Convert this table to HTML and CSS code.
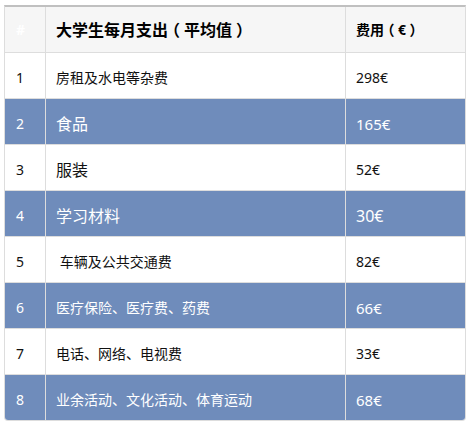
FILE: index.html
```html
<!DOCTYPE html>
<html lang="zh-CN">
<head>
<meta charset="utf-8">
<title>大学生每月支出</title>
<link rel="stylesheet" href="styles.css">
</head>
<body>
<div class="table-wrap">
  <table class="expenses">
    <colgroup>
      <col class="c-idx">
      <col class="c-item">
      <col class="c-cost">
    </colgroup>
    <thead>
      <tr>
        <th class="idx">#</th>
        <th class="item">大学生每月支出<span class="paren">（</span>平均值<span class="paren">）</span></th>
        <th class="cost">费用<span class="paren">（</span>€<span class="paren">）</span></th>
      </tr>
    </thead>
    <tbody>
      <tr>
        <td class="idx">1</td>
        <td class="item s14">房租及水电等杂费</td>
        <td class="cost s14">298€</td>
      </tr>
      <tr class="alt">
        <td class="idx">2</td>
        <td class="item s16">食品</td>
        <td class="cost s15">165€</td>
      </tr>
      <tr>
        <td class="idx">3</td>
        <td class="item s16">服装</td>
        <td class="cost s14">52€</td>
      </tr>
      <tr class="alt">
        <td class="idx">4</td>
        <td class="item s16">学习材料</td>
        <td class="cost s16">30€</td>
      </tr>
      <tr>
        <td class="idx">5</td>
        <td class="item s14">&nbsp;车辆及公共交通费</td>
        <td class="cost s14">82€</td>
      </tr>
      <tr class="alt">
        <td class="idx">6</td>
        <td class="item s14">医疗保险、医疗费、药费</td>
        <td class="cost s15">66€</td>
      </tr>
      <tr>
        <td class="idx">7</td>
        <td class="item s14">电话、网络、电视费</td>
        <td class="cost s14">33€</td>
      </tr>
      <tr class="alt">
        <td class="idx">8</td>
        <td class="item s14">业余活动、文化活动、体育运动</td>
        <td class="cost s15">68€</td>
      </tr>
    </tbody>
  </table>
</div>
</body>
</html>
```

FILE: styles.css
```css
html, body {
  margin: 0;
  background: #ffffff;
}

body {
  padding: 5px 4px 0 4px;
  font-family: "Noto Sans", "Noto Sans CJK SC", sans-serif;
  color: #111111;
}

.table-wrap {
  width: 462px;
  box-sizing: border-box;
  border-top: 2px solid #c0c0c0;
  border-left: 1px solid #dddddd;
  border-right: 1px solid #dddddd;
  border-bottom: 1px solid #dddddd;
  border-radius: 0 0 4px 4px;
  overflow: hidden;
}

.expenses {
  width: 100%;
  table-layout: fixed;
  border-collapse: separate;
  border-spacing: 0;
}

.c-idx { width: 41px; }
.c-item { width: 300px; }
.c-cost { width: 119px; }

.expenses th,
.expenses td {
  box-sizing: border-box;
  height: 46px;
  padding: 0 10px;
  border-bottom: 1px solid #dddddd;
  text-align: left;
  vertical-align: middle;
  white-space: nowrap;
  font-size: 14px;
  font-weight: 400;
  line-height: 20px;
}

.expenses td {
  padding-top: 4px;
}

.expenses tbody tr:last-child td {
  border-bottom: none;
  height: 45px;
}

.expenses .idx,
.expenses .item {
  border-right: 1px solid #dddddd;
}

.expenses .idx {
  padding-left: 11px;
  padding-right: 0;
}

.expenses thead th {
  background: #f6f6f6;
  height: 46px;
  font-weight: 700;
  color: #000000;
}

.expenses thead .idx {
  color: #ffffff;
}

.expenses thead .item {
  font-size: 16px;
}

.expenses thead .cost {
  font-size: 14px;
}

.paren {
  font-family: "Noto Sans CJK SC", sans-serif;
  font-feature-settings: "halt" 1;
  padding: 0 0.25em;
}

.expenses tr.alt td {
  background: #6f8cbb;
  color: #ffffff;
}

.expenses .s14 { font-size: 14px; }
.expenses .s15 { font-size: 15px; }
.expenses .s16 { font-size: 16px; }
```
